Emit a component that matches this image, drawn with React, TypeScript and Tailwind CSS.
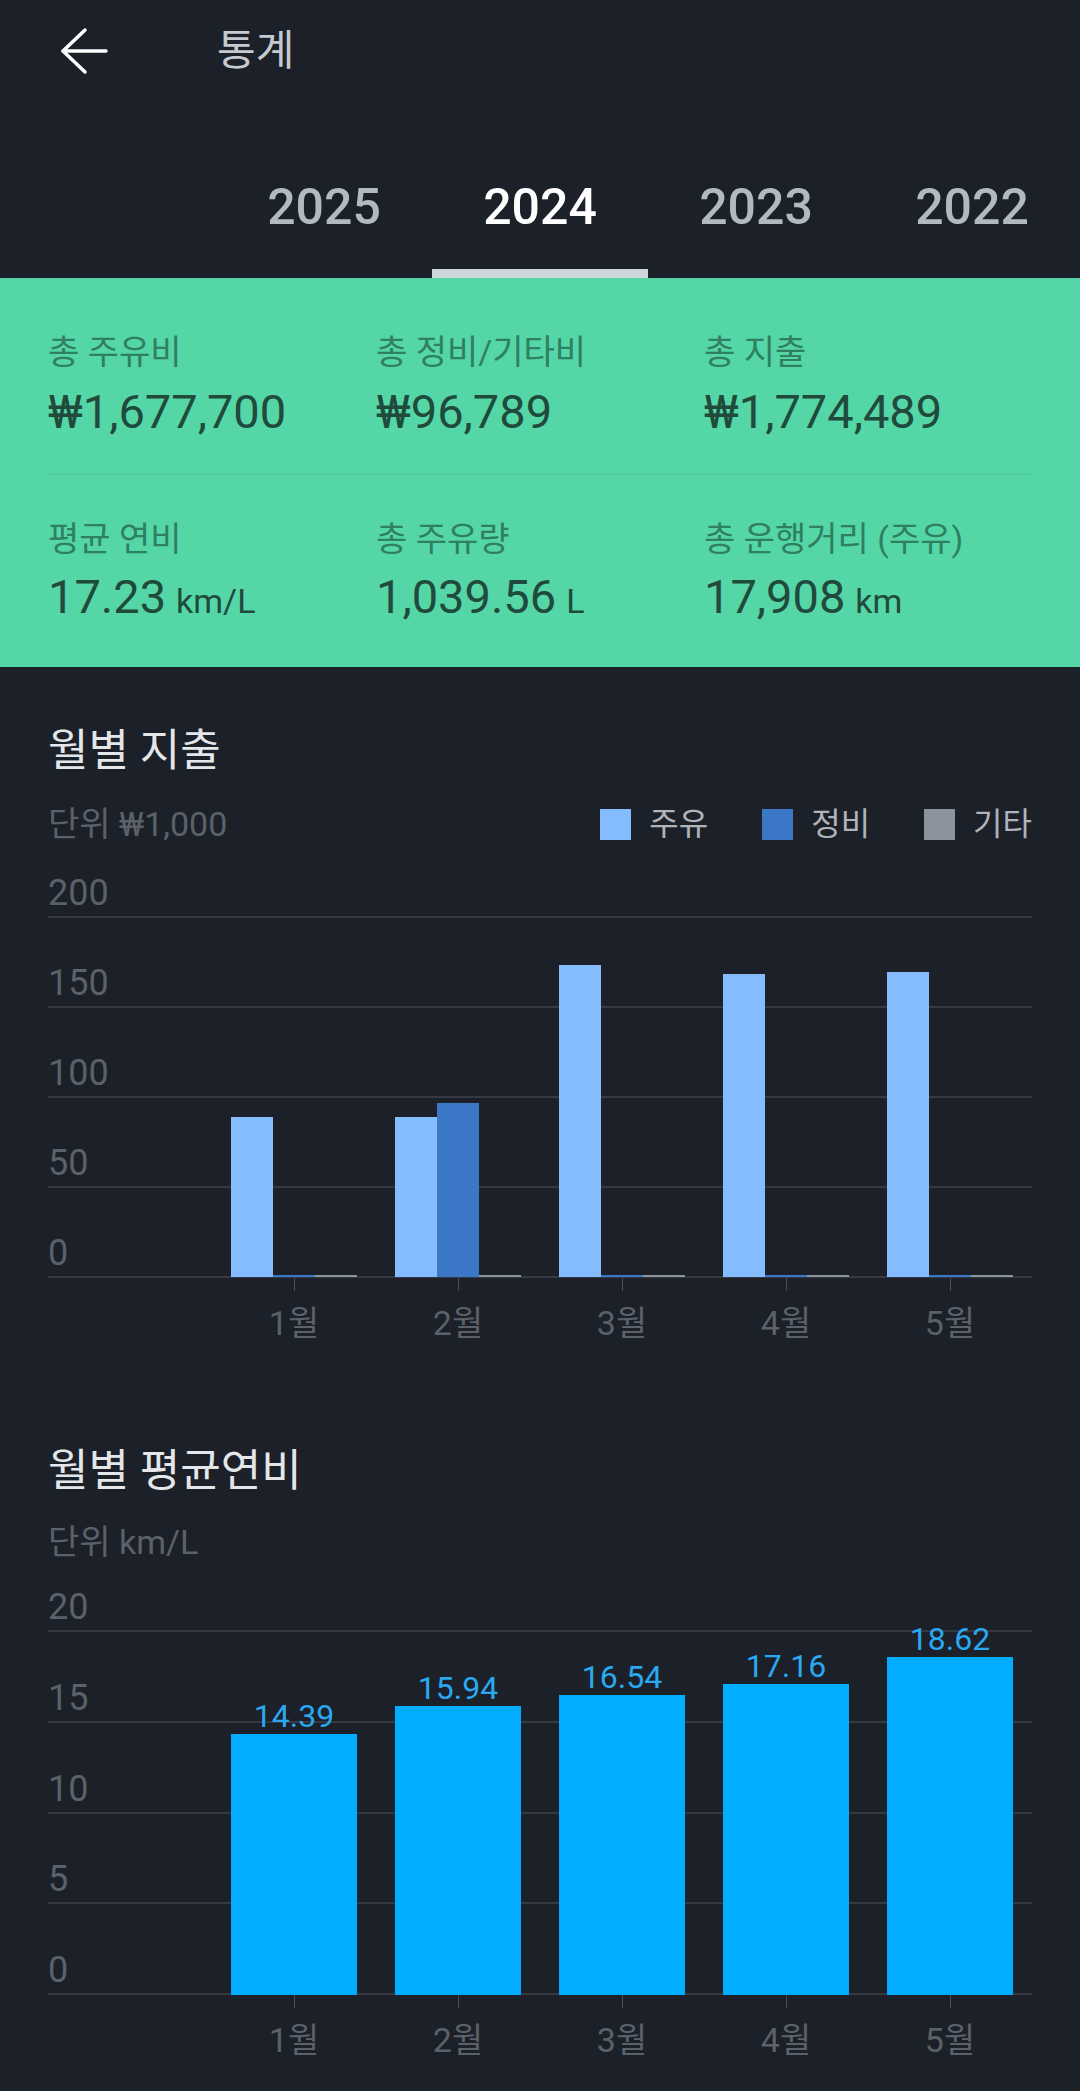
const stats = [
  [
    { label: '총 주유비', value: '₩1,677,700', unit: '' },
    { label: '총 정비/기타비', value: '₩96,789', unit: '' },
    { label: '총 지출', value: '₩1,774,489', unit: '' },
  ],
  [
    { label: '평균 연비', value: '17.23', unit: 'km/L' },
    { label: '총 주유량', value: '1,039.56', unit: 'L' },
    { label: '총 운행거리 (주유)', value: '17,908', unit: 'km' },
  ],
];

const months = ['', '1월', '2월', '3월', '4월', '5월'];

// fuel, repair, other (unit ₩1,000)
const spending = [null, [89, 0, 0], [89, 97, 0], [174, 0, 0], [169, 0, 0], [170, 0, 0]];
const efficiency = [null, 14.39, 15.94, 16.54, 17.16, 18.62];

const legend = [
  { name: '주유', color: 'bg-[#85bbff]' },
  { name: '정비', color: 'bg-[#3a77c6]' },
  { name: '기타', color: 'bg-[#8b949c]' },
];

const Grid = ({ bands }: { bands: { label: string; h: string }[] }) => (
  <div className="flex flex-col">
    {bands.map((b) => (
      <div key={b.label} className={`${b.h} border-b-2 border-[#353a42] flex items-end pb-[3px]`}>
        <span className="text-[36px] leading-[40px] text-[#5b6169]">{b.label}</span>
      </div>
    ))}
  </div>
);

const XAxis = () => (
  <div>
    <div className="grid grid-cols-6 h-[13px]">
      {months.map((m, i) => (
        <div key={i} className="flex justify-center">
          {m && <div className="w-px h-full bg-[#4a4f57]" />}
        </div>
      ))}
    </div>
    <div className="grid grid-cols-6 mt-[12px]">
      {months.map((m, i) => (
        <div key={i} className="text-center text-[34px] leading-[40px] text-[#5b6169]">
          {m}
        </div>
      ))}
    </div>
  </div>
);

const SpendingChart = () => (
  <div className="mt-[14px]">
    <div className="relative">
      <Grid
        bands={[
          { label: '200', h: 'h-[60px]' },
          { label: '150', h: 'h-[90px]' },
          { label: '100', h: 'h-[90px]' },
          { label: '50', h: 'h-[90px]' },
          { label: '0', h: 'h-[90px]' },
        ]}
      />
      <div className="absolute left-0 right-0 top-0 h-[419px] grid grid-cols-6">
        {spending.map((g, i) => (
          <div key={i} className="flex items-end justify-center">
            {g && (
              <>
                <div className="w-[42px] bg-[#85bbff]" style={{ height: Math.max(2, g[0] * 1.795) }} />
                <div className="w-[42px] bg-[#3a77c6]" style={{ height: Math.max(2, g[1] * 1.795) }} />
                <div className="w-[42px] bg-[#8b949c]" style={{ height: Math.max(2, g[2] * 1.795) }} />
              </>
            )}
          </div>
        ))}
      </div>
    </div>
    <XAxis />
  </div>
);

const EfficiencyChart = () => (
  <div className="mt-0">
    <div className="relative">
      <Grid
        bands={[
          { label: '20', h: 'h-[70px]' },
          { label: '15', h: 'h-[91px]' },
          { label: '10', h: 'h-[91px]' },
          { label: '5', h: 'h-[90px]' },
          { label: '0', h: 'h-[91px]' },
        ]}
      />
      <div className="absolute left-0 right-0 top-0 h-[433px] grid grid-cols-6">
        {efficiency.map((v, i) => (
          <div key={i} className="flex flex-col items-center justify-end">
            {v !== null && (
              <>
                <span className="text-[32px] leading-[36px] text-[#2aa8f0]">{v.toFixed(2)}</span>
                <div className="w-[126px] bg-[#00adff]" style={{ height: v * 18.15 }} />
              </>
            )}
          </div>
        ))}
      </div>
    </div>
    <XAxis />
  </div>
);

export default function App() {
  return (
    <div className="w-[1080px] min-h-[2091px] bg-[#1b2029] font-[Roboto,'Noto_Sans_CJK_KR',sans-serif]">
      {/* top bar */}
      <div className="h-[102px] flex items-center pl-[60px]">
        <svg width="48" height="48" viewBox="0 0 48 48" fill="none" stroke="#ffffff" strokeWidth="3.5" strokeLinecap="round" strokeLinejoin="round">
          <path d="M25 3 L3 24 L25 45" />
          <path d="M3 24 H46" />
        </svg>
        <span className="ml-[109px] text-[42px] leading-[50px] text-[#c5cad0]">통계</span>
      </div>

      {/* year tabs */}
      <div className="flex h-[176px]">
        <div className="w-[216px]" />
        {['2025', '2024', '2023', '2022'].map((y) => (
          <div
            key={y}
            className={`w-[216px] h-full flex items-center justify-center pt-[43px] border-b-[9px] text-[50px] leading-[60px] font-medium ${
              y === '2024' ? 'border-[#cfd6dc] text-white' : 'border-transparent text-[#b1bac1]'
            }`}
          >
            {y}
          </div>
        ))}
      </div>

      {/* summary */}
      <div className="bg-[#55d6a6] px-[48px] pt-[54px] pb-[40px]">
        {stats.map((row, r) => (
          <div key={r}>
            {r === 1 && <div className="h-[2px] bg-[#4fcb9c] mt-[35px] mb-[44px]" />}
            <div className="grid grid-cols-3">
              {row.map((s) => (
                <div key={s.label}>
                  <div className="text-[34px] leading-[40px] text-[#2f7f62]">{s.label}</div>
                  <div className={`${r === 0 ? 'mt-[14px]' : 'mt-[12px]'} text-[47px] leading-[52px] text-[#1f4a3c] whitespace-nowrap`}>
                    {s.value}
                    {s.unit && <span className="text-[34px] ml-[10px]">{s.unit}</span>}
                  </div>
                </div>
              ))}
            </div>
          </div>
        ))}
      </div>

      <div className="px-[48px]">
        {/* monthly spending */}
        <div className="mt-[56px] text-[44px] leading-[56px] text-[#e4e6e9]">월별 지출</div>
        <div className="mt-[25px] flex items-center justify-between">
          <span className="text-[34px] leading-[40px] text-[#5b6169]">단위 ₩1,000</span>
          <div className="flex items-center gap-[54px]">
            {legend.map((l) => (
              <div key={l.name} className="flex items-center gap-[18px]">
                <div className={`w-[31px] h-[31px] ${l.color}`} />
                <span className="text-[32px] leading-[40px] text-[#b0b4b9]">{l.name}</span>
              </div>
            ))}
          </div>
        </div>
        <SpendingChart />

        {/* monthly efficiency */}
        <div className="mt-[100px] text-[44px] leading-[56px] text-[#e4e6e9]">월별 평균연비</div>
        <div className="mt-[23px] text-[34px] leading-[40px] text-[#5b6169]">단위 km/L</div>
        <EfficiencyChart />
      </div>
    </div>
  );
}
